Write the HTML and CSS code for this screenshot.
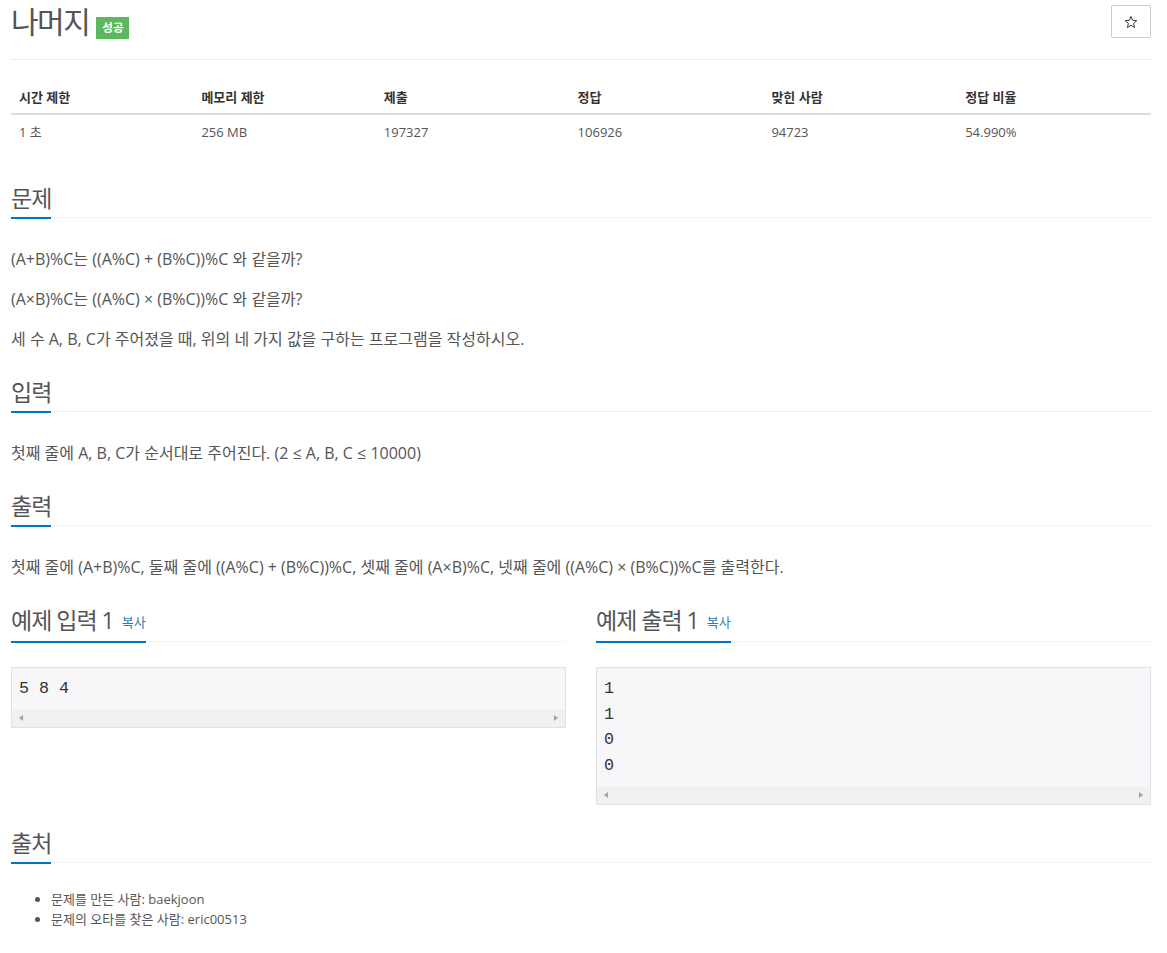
FILE: index.html
```html
<!DOCTYPE html>
<html lang="ko">
<head>
<meta charset="utf-8">
<title>나머지</title>
<link rel="stylesheet" href="styles.css">
</head>
<body>
<div class="container">
  <div class="page-header">
    <h1 class="title"><span class="title-text">나머지</span><span class="label-success">성공</span></h1>
    <button class="star-btn" type="button" aria-label="즐겨찾기">
      <svg class="star" width="14" height="14" viewBox="0 0 24 24" aria-hidden="true"><path d="M12 2.5l2.8 6.6 7.1.6-5.4 4.7 1.6 7-6.1-3.7-6.1 3.7 1.6-7-5.4-4.7 7.1-.6z" fill="none" stroke="#333" stroke-width="1.7" stroke-linejoin="round"/></svg>
    </button>
  </div>

  <table class="info">
    <thead>
      <tr>
        <th class="c16">시간 제한</th>
        <th class="c16">메모리 제한</th>
        <th class="c17">제출</th>
        <th class="c17">정답</th>
        <th class="c17">맞힌 사람</th>
        <th class="c17">정답 비율</th>
      </tr>
    </thead>
    <tbody>
      <tr>
        <td>1 초</td>
        <td>256 MB</td>
        <td>197327</td>
        <td>106926</td>
        <td>94723</td>
        <td>54.990%</td>
      </tr>
    </tbody>
  </table>

  <section class="sec">
    <div class="headline"><h2>문제</h2></div>
    <div class="text">
      <p>(A+B)%C는 ((A%C) + (B%C))%C 와 같을까?</p>
      <p>(A×B)%C는 ((A%C) × (B%C))%C 와 같을까?</p>
      <p>세 수 A, B, C가 주어졌을 때, 위의 네 가지 값을 구하는 프로그램을 작성하시오.</p>
    </div>
  </section>

  <section class="sec">
    <div class="headline"><h2>입력</h2></div>
    <div class="text">
      <p>첫째 줄에 A, B, C가 순서대로 주어진다. (2 ≤ A, B, C ≤ 10000)</p>
    </div>
  </section>

  <section class="sec">
    <div class="headline"><h2>출력</h2></div>
    <div class="text">
      <p>첫째 줄에 (A+B)%C, 둘째 줄에 ((A%C) + (B%C))%C, 셋째 줄에 (A×B)%C, 넷째 줄에 ((A%C) × (B%C))%C를 출력한다.</p>
    </div>
  </section>

  <div class="samples">
    <section class="sample">
      <div class="headline"><h2>예제 입력 1 <a class="copy" href="#">복사</a></h2></div>
      <div class="code-box">
        <pre class="code">5 8 4</pre>
        <div class="hscroll"><span class="arr-l"></span><span class="arr-r"></span></div>
      </div>
    </section>
    <section class="sample">
      <div class="headline"><h2>예제 출력 1 <a class="copy" href="#">복사</a></h2></div>
      <div class="code-box">
        <pre class="code">1
1
0
0</pre>
        <div class="hscroll"><span class="arr-l"></span><span class="arr-r"></span></div>
      </div>
    </section>
  </div>

  <section class="sec">
    <div class="headline"><h2>출처</h2></div>
    <ul class="source">
      <li>문제를 만든 사람: baekjoon</li>
      <li>문제의 오타를 찾은 사람: eric00513</li>
    </ul>
  </section>
</div>
</body>
</html>
```

FILE: styles.css
```css
* {
  box-sizing: border-box;
}

body {
  margin: 0;
  background: #fff;
  color: #555;
  font-family: "Open Sans", "Noto Sans CJK KR", sans-serif;
  font-size: 13px;
}

.container {
  display: flex;
  flex-direction: column;
  padding: 0 16px 40px 11px;
}

/* header */
.page-header {
  display: flex;
  justify-content: space-between;
  align-items: flex-start;
  height: 60px;
  padding-top: 5px;
  border-bottom: 1px solid #eee;
}

.title {
  display: flex;
  align-items: flex-start;
  gap: 7px;
  margin: 0;
  font-size: 30px;
  font-weight: 400;
  line-height: 33px;
  color: #555;
}

.title-text {
  letter-spacing: -1.5px;
}

.label-success {
  margin-top: 12px;
  padding: 0 6px;
  height: 22px;
  line-height: 22px;
  background: #5cb85c;
  color: #fff;
  font-size: 11.5px;
  font-weight: 700;
  letter-spacing: 0;
}

.star-btn {
  display: flex;
  align-items: center;
  justify-content: center;
  width: 40px;
  height: 33px;
  padding: 0;
  background: #fff;
  border: 1px solid #ccc;
  border-radius: 2px;
}

.star {
  display: block;
}

/* table */
.info {
  width: 100%;
  margin: 19px 0 20px;
  border-collapse: collapse;
  font-size: 13px;
}

.info .c16 {
  width: 16%;
}

.info .c17 {
  width: 17%;
}

.info th {
  padding: 8px 8px 6px;
  line-height: 20px;
  text-align: left;
  font-weight: 700;
  color: #333;
  border-bottom: 2px solid #ddd;
}

.info td {
  padding: 7px 8px 8px;
  line-height: 20px;
  color: #555;
}

/* section headlines */
.headline {
  margin: 14px 0 26px;
  border-bottom: 1px dotted #e4e9f0;
}

.headline h2 {
  display: inline-block;
  margin: 0 0 -2px;
  padding-bottom: 5px;
  border-bottom: 2px solid #0076c0;
  font-size: 23px;
  font-weight: 400;
  line-height: 28px;
  letter-spacing: -1px;
  color: #555;
}

.copy {
  margin-left: 3px;
  font-size: 13px;
  letter-spacing: 0;
  color: #2b7bb9;
  text-decoration: none;
  vertical-align: 2px;
}

.text p {
  margin: 0 0 10px;
  font-size: 16px;
  line-height: 30px;
  color: #555;
}

/* samples */
.samples {
  display: grid;
  grid-template-columns: 1fr 1fr;
  column-gap: 30px;
}

.sample .headline {
  margin-bottom: 25px;
}

.code-box {
  margin-bottom: 10px;
  background: #f7f7f9;
  border: 1px solid #e1e1e8;
}

.code {
  margin: 0;
  padding: 8px 7px 8px;
  font-family: "Liberation Mono", "DejaVu Sans Mono", monospace;
  font-size: 16.7px;
  line-height: 25.7px;
  color: #333;
}

.hscroll {
  display: flex;
  justify-content: space-between;
  align-items: center;
  height: 17px;
  padding: 0 7px;
  background: #f0f0f0;
}

.arr-l {
  width: 0;
  height: 0;
  border-top: 3.5px solid transparent;
  border-bottom: 3.5px solid transparent;
  border-right: 4px solid #a3a3a3;
}

.arr-r {
  width: 0;
  height: 0;
  border-top: 3.5px solid transparent;
  border-bottom: 3.5px solid transparent;
  border-left: 4px solid #a3a3a3;
}

/* source list */
.source {
  margin: 0;
  padding-left: 40px;
  font-size: 13px;
  line-height: 20px;
  color: #555;
}
```
